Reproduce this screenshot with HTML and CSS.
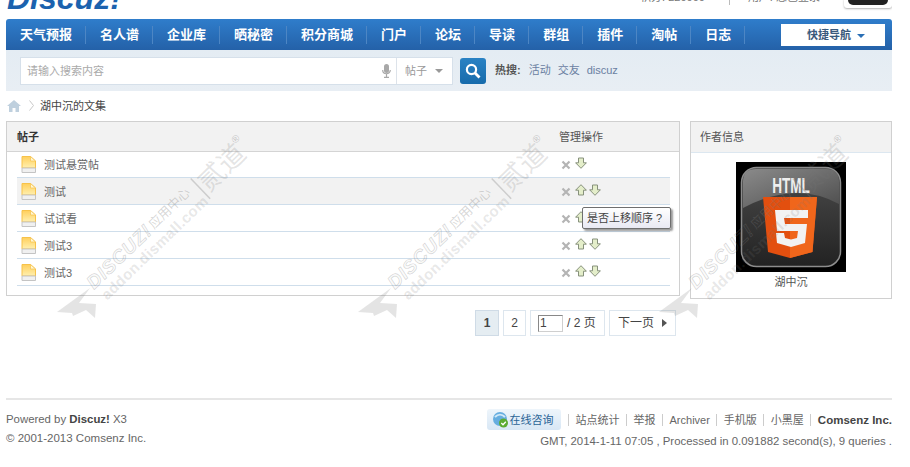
FILE: index.html
```html
<!DOCTYPE html>
<html lang="zh">
<head>
<meta charset="utf-8">
<title>湖中沉的文集</title>
<link rel="stylesheet" href="styles.css">
</head>
<body>
<svg class="defs" width="0" height="0" aria-hidden="true">
  <defs>
    <linearGradient id="docfill" x1="0" y1="0" x2="0" y2="1">
      <stop offset="0" stop-color="#ffcf5c"/><stop offset="1" stop-color="#fff0b0"/>
    </linearGradient>
    <symbol id="doc" viewBox="0 0 15 17">
      <path d="M1 .5H9.500L14.500 5V12H1Z" fill="url(#docfill)" stroke="#f7c24a"/>
      <path d="M9.500 .5V5H14.500Z" fill="#fff6d2" stroke="#f7c24a" stroke-width=".7"/>
      <path d="M1 12H14.500V16.500H1Z" fill="#f0f0f0" stroke="#c4c4c4"/>
    </symbol>
    <symbol id="x" viewBox="0 0 10 10">
      <path d="M1.500 1.500L8.500 8.500M8.500 1.500L1.500 8.500" stroke="#b4b4b4" stroke-width="2.200"/>
    </symbol>
    <symbol id="up" viewBox="0 0 12 12">
      <path d="M6 .7L11.400 6.200H8.500V11H3.500V6.200H.6Z" fill="#e4eeca" stroke="#87917c"/>
    </symbol>
    <symbol id="down" viewBox="0 0 12 12">
      <path d="M6 11.300L11.400 5.800H8.500V1H3.500V5.800H.6Z" fill="#e4eeca" stroke="#87917c"/>
    </symbol>
    <g id="mark">
      <path d="M0 25L33 1L22 16L39 17L38 31L29 23L16 29L15 26Z" class="wm-fill"/>
      <g transform="translate(37,3) rotate(-44)">
        <text class="wm-brand" x="0" y="0">DISCUZ!</text>
        <text class="wm-cn" x="85" y="-2">应用中心</text>
        <path d="M147 -13V15" class="wm-line"/>
        <text class="wm-dao" x="150" y="10">贰道</text>
        <text class="wm-reg" x="203" y="-7">®</text>
        <text class="wm-url" x="2" y="17">addon.dismall.com</text>
      </g>
    </g>
  </defs>
</svg>

<div class="page">
  <header class="top">
    <div class="logo">Discuz!</div>
    <div class="top-right">
      <span class="top-stat">积分: 220000</span>
      <span class="top-sep"></span>
      <span class="top-user">用户: 您已登录</span>
      <span class="top-badge"><span class="top-badge-in"></span></span>
    </div>
  </header>

  <nav class="nav">
    <ul class="nav-list">
      <li>天气预报</li><li>名人谱</li><li>企业库</li><li>晒秘密</li><li>积分商城</li><li>门户</li><li>论坛</li><li>导读</li><li>群组</li><li>插件</li><li>淘帖</li><li>日志</li>
    </ul>
    <div class="quick">快捷导航<span class="quick-caret"></span></div>
  </nav>

  <div class="search">
    <div class="search-box">
      <span class="search-ph">请输入搜索内容</span>
      <svg class="mic" width="9" height="14" viewBox="0 0 9 14"><rect x="2" y="0" width="5" height="9" rx="2.500" fill="#a8a8a8"/><path d="M.7 6c0 5 7.600 5 7.600 0M4.500 10v3M2 13.400h5" fill="none" stroke="#a8a8a8" stroke-width="1.200"/></svg>
      <span class="search-type">帖子<span class="type-caret"></span></span>
    </div>
    <div class="search-btn">
      <svg width="16" height="16" viewBox="0 0 16 16"><circle cx="6.500" cy="6.500" r="4.600" fill="none" stroke="#fff" stroke-width="2.200"/><path d="M10 10L14.500 14.500" stroke="#fff" stroke-width="2.800"/></svg>
    </div>
    <div class="hot"><strong>热搜:</strong><a>活动</a><a>交友</a><a>discuz</a></div>
  </div>

  <div class="crumb">
    <svg class="home" width="14" height="12" viewBox="0 0 14 12"><path d="M7 0L14 6H12V12H8.500V8H5.500V12H2V6H0Z" fill="#bfd0de"/></svg>
    <svg class="chev" width="5" height="11" viewBox="0 0 5 11"><path d="M.5 .5L4.500 5.500L.5 10.500" fill="none" stroke="#c9c9c9"/></svg>
    <span>湖中沉的文集</span>
  </div>

  <main class="main">
    <section class="content">
      <div class="panel">
        <div class="panel-head list-head"><strong>帖子</strong><span class="ops-title">管理操作</span></div>
        <ul class="rows">
          <li class="row"><svg class="doc"><use href="#doc"/></svg><span class="subject">测试悬赏帖</span><span class="ops"><svg class="ic-x"><use href="#x"/></svg><svg class="ic-arrow"><use href="#down"/></svg></span></li>
          <li class="row row-on"><svg class="doc"><use href="#doc"/></svg><span class="subject">测试</span><span class="ops"><svg class="ic-x"><use href="#x"/></svg><svg class="ic-arrow"><use href="#up"/></svg><svg class="ic-arrow"><use href="#down"/></svg></span></li>
          <li class="row"><svg class="doc"><use href="#doc"/></svg><span class="subject">试试看</span><span class="ops"><svg class="ic-x"><use href="#x"/></svg><svg class="ic-arrow"><use href="#up"/></svg><svg class="ic-arrow"><use href="#down"/></svg></span><div class="tip">是否上移顺序 ?</div></li>
          <li class="row"><svg class="doc"><use href="#doc"/></svg><span class="subject">测试3</span><span class="ops"><svg class="ic-x"><use href="#x"/></svg><svg class="ic-arrow"><use href="#up"/></svg><svg class="ic-arrow"><use href="#down"/></svg></span></li>
          <li class="row"><svg class="doc"><use href="#doc"/></svg><span class="subject">测试3</span><span class="ops"><svg class="ic-x"><use href="#x"/></svg><svg class="ic-arrow"><use href="#up"/></svg><svg class="ic-arrow"><use href="#down"/></svg></span></li>
        </ul>
      </div>
      <div class="pager">
        <span class="pg pg-cur">1</span>
        <span class="pg pg-num">2</span>
        <span class="pg pg-jump"><span class="pg-input">1</span><span>/ 2 页</span></span>
        <span class="pg pg-next">下一页<span class="next-caret"></span></span>
      </div>
    </section>

    <aside class="panel side">
      <div class="panel-head side-head">作者信息</div>
      <div class="side-body">
        <svg class="avatar" width="110" height="110" viewBox="0 0 110 110">
          <defs>
            <linearGradient id="tile" x1="0" y1="0" x2="0" y2="1">
              <stop offset="0" stop-color="#4c4c4c"/><stop offset="1" stop-color="#222"/>
            </linearGradient>
            <linearGradient id="gloss" x1="0" y1="0" x2="1" y2="1">
              <stop offset="0" stop-color="#8a8a8a"/><stop offset="1" stop-color="#4e4e4e"/>
            </linearGradient>
          </defs>
          <rect width="110" height="110" fill="#000"/>
          <rect x="5.500" y="5.500" width="99" height="99" rx="15" fill="url(#tile)" stroke="#8c8c8c" stroke-width="1.500"/>
          <path d="M7 46V20Q7 7 20 7H90Q103 7 103 20V42Q60 18 7 46Z" fill="url(#gloss)"/>
          <text class="av-html" transform="translate(55,31) scale(.68,1.120)">HTML</text>
          <path d="M27 35H81L76.500 90L54 96L32 90Z" fill="#e34f0f"/>
          <path d="M54 35H81L76.500 90L54 96Z" fill="#f0661b"/>
          <path d="M39 48H72V56H48L49 62H71L69 81L55 85L41 81L40 71H48L49 76L55 77.500L61 76L62 69H41Z" fill="#f2f2f2"/>
        </svg>
        <div class="side-name">湖中沉</div>
      </div>
    </aside>
  </main>

  <footer class="foot">
    <div class="foot-left">
      <p class="foot-power">Powered by <strong>Discuz!</strong> X3</p>
      <p class="foot-copy">© 2001-2013 Comsenz Inc.</p>
    </div>
    <div class="foot-right">
      <div class="foot-links">
        <span class="consult">
          <svg width="18" height="18" viewBox="0 0 18 18"><circle cx="8" cy="8" r="7" fill="#66addf"/><path d="M3 6c3-3 7-3 10 0" fill="none" stroke="#cfe8f8" stroke-width="2"/><circle cx="11.500" cy="12" r="4.500" fill="#5cab32"/><path d="M9.300 12l1.700 1.700 2.800-3" fill="none" stroke="#fff" stroke-width="1.300"/></svg>
          在线咨询
        </span>
        <a>站点统计</a><a>举报</a><a>Archiver</a><a>手机版</a><a>小黑屋</a><a class="foot-strong">Comsenz Inc.</a>
      </div>
      <p class="foot-time">GMT, 2014-1-11 07:05 , Processed in 0.091882 second(s), 9 queries .</p>
    </div>
  </footer>
</div>

<svg class="watermark" width="910" height="467" aria-hidden="true">
  <use href="#mark" x="57" y="287"/>
  <use href="#mark" x="358" y="287"/>
  <use href="#mark" x="659" y="287"/>
</svg>
</body>
</html>
```

FILE: styles.css
```css
* { box-sizing: border-box; }
html, body { margin: 0; padding: 0; background: #fff; overflow: hidden; }
body {
  width: 910px;
  height: 467px;
  position: relative;
  font: 11px/16px "Liberation Sans", "Noto Sans CJK SC", sans-serif;
  color: #444;
}
p, ul { margin: 0; padding: 0; list-style: none; }
a { color: inherit; text-decoration: none; }
.defs { position: absolute; }
.page { width: 886px; margin-left: 6px; }

/* top */
.top { height: 19px; display: flex; justify-content: space-between; overflow: hidden; position: relative; }
.logo {
  margin: -17px 0 0 1px;
  font: italic bold 32px/30px "Liberation Sans", sans-serif;
  color: #1b62ae;
}
.top-right { display: flex; align-items: flex-start; color: #777; font-size: 11px; white-space: nowrap; }
.top-stat { margin: -11px 0 0 0; }
.top-sep { flex: none; width: 1px; height: 6px; background: #bbb; margin: -1px 18px 0 24px; }
.top-user { margin: -11px 24px 0 0; }
.top-badge { flex: none; width: 48px; height: 9px; margin-top: -1px; padding: 0 4px; background: #fff; border-radius: 0 0 3px 3px; box-shadow: 0 1px 2px rgba(0,0,0,.3); }
.top-badge-in { display: block; width: 40px; height: 6px; background: #222; border-radius: 0 0 5px 5px; }

/* nav */
.nav {
  height: 31px;
  display: flex;
  justify-content: space-between;
  background: linear-gradient(#2f7dcb, #2461a8);
  border-radius: 3px 3px 0 0;
  padding: 0 7px 0 0;
}
.nav-list { display: flex; padding-top: 7px; }
.nav-list li {
  height: 18px;
  padding: 0 13px 0 14px;
  border-right: 1px solid #4d86c4;
  font-size: 13px;
  line-height: 17px;
  font-weight: bold;
  color: #fff;
}
.quick {
  width: 104px;
  height: 22px;
  margin-top: 5px;
  padding-left: 26px;
  display: flex;
  align-items: center;
  background: #fff;
  color: #3a5a7c;
  font-weight: bold;
}
.quick-caret { border: 4px solid transparent; border-top-color: #2a6fb5; border-bottom: 0; margin: 2px 0 0 6px; }

/* search */
.search {
  height: 41px;
  display: flex;
  padding: 7px 0 0 14px;
  background: linear-gradient(#e4ecf3, #e8eef4);
}
.search-box {
  width: 433px;
  height: 28px;
  display: flex;
  align-items: center;
  background: #fff;
  border: 1px solid #d6e0ea;
  padding-left: 6px;
}
.search-ph { color: #aaa; flex: 1; }
.mic { margin-right: 5px; }
.search-type {
  width: 56px;
  height: 26px;
  line-height: 26px;
  padding-left: 8px;
  border-left: 1px solid #dde3ea;
  color: #999;
  display: flex;
  align-items: center;
}
.type-caret { border: 4px solid transparent; border-top-color: #999; border-bottom: 0; margin-left: 8px; }
.search-btn {
  width: 26px;
  height: 26px;
  margin: 1px 0 0 7px;
  display: flex;
  align-items: center;
  justify-content: center;
  background: linear-gradient(#2a82c4, #176bab);
  border-radius: 3px;
}
.hot { display: flex; align-items: center; height: 26px; margin: 0 0 0 9px; color: #6a80a2; }
.hot strong { color: #555; margin-right: 8px; }
.hot a { margin-right: 7px; }

/* breadcrumb */
.crumb { height: 30px; display: flex; align-items: center; padding: 0 0 1px 1px; color: #444; }
.home { margin-right: 8px; }
.chev { margin-right: 6px; }

/* main */
.main { display: flex; gap: 10px; align-items: flex-start; }
.content { width: 674px; }
.panel { border: 1px solid #d0d0d0; }
.panel-head { background: #f2f2f2; height: 30px; line-height: 30px; }
.list-head {
  display: flex;
  justify-content: space-between;
  padding: 0 0 0 10px;
  border-bottom: 1px solid #d4d4d4;
}
.list-head strong { color: #333; }
.ops-title { width: 120px; color: #555; }
.rows { margin: -1px 9px 0 10px; padding-bottom: 9px; position: relative; }
.row {
  height: 27px;
  position: relative;
  display: flex;
  align-items: center;
  border-bottom: 1px solid #cfdeeb;
  padding: 1px 0 0 4px;
  color: #666;
}
.row-on { background: #f2f2f2; }
.doc { width: 15px; height: 17px; margin-right: 8px; }
.subject { flex: 1; }
.ops { width: 110px; display: flex; align-items: center; padding-left: 1px; }
.ic-x { width: 10px; height: 10px; margin: 0 4px 0 0; }
.ic-arrow { width: 12px; height: 12px; margin: -4px 2px 0 0; }
.tip {
  position: absolute;
  left: 565px;
  top: 2px;
  width: 89px;
  height: 22px;
  padding-left: 4px;
  line-height: 20px;
  color: #444;
  white-space: nowrap;
  border: 1px solid #6f6f6f;
  border-radius: 2px;
  background: linear-gradient(#fff, #e9e9f3);
  box-shadow: 2px 2px 2px rgba(0,0,0,.4);
}

/* pager */
.pager { display: flex; justify-content: flex-end; gap: 4px; margin: 14px 4px 0 0; height: 26px; }
.pg {
  height: 26px;
  border: 1px solid #dde6ee;
  line-height: 24px;
  font-size: 12px;
  color: #444;
  display: flex;
  align-items: center;
  justify-content: center;
}
.pg-cur { width: 24px; background: #e5edf2; border-color: #cfdbe6; font-weight: bold; }
.pg-num { width: 23px; }
.pg-jump { width: 75px; justify-content: flex-start; padding-left: 7px; gap: 4px; }
.pg-input { width: 25px; height: 17px; line-height: 15px; border: 1px solid #cfcfcf; border-top-color: #888; border-left-color: #888; padding-left: 1px; }
.pg-next { width: 67px; }
.next-caret { border: 4px solid transparent; border-left: 5px solid #555; border-right: 0; margin-left: 8px; }

/* side */
.side { width: 202px; height: 178px; }
.side-head { height: 31px; padding-left: 9px; border-bottom: 1px solid #dce7f0; color: #555; }
.side-body { display: flex; flex-direction: column; align-items: center; padding-top: 9px; }
.avatar { display: block; }
.side-name { margin-top: 2px; color: #555; }
.av-html { font: bold 20px "Liberation Sans", sans-serif; fill: #eee; text-anchor: middle; }

/* footer */
.foot {
  position: absolute;
  left: 6px;
  top: 398px;
  width: 886px;
  border-top: 2px solid #e6e6e6;
  display: flex;
  justify-content: space-between;
  color: #666;
  font-size: 12px;
}
.foot-left { padding-top: 10px; }
.foot-left p { line-height: 18px; }
.foot-left strong { color: #444; }
.foot-power { font-size: 11.4px; }
.foot-copy { margin-top: 1px; font-size: 11.5px; }
.foot-right { display: flex; flex-direction: column; align-items: flex-end; padding-top: 9px; }
.foot-links { display: flex; align-items: center; height: 21px; font-size: 11px; }
.foot-links a { padding: 0 6px 0 7px; border-left: 1px solid #ccc; line-height: 12px; }
.foot-links a:last-child { padding-right: 0; }
.foot-strong { font-weight: bold; font-size: 11.5px; color: #444; }
.consult {
  width: 74px;
  height: 21px;
  margin-right: 7px;
  display: flex;
  align-items: center;
  padding-left: 5px;
  background: linear-gradient(#eef5fb, #d8e7f5);
  border-radius: 3px;
  color: #2a6496;
}
.foot-time { line-height: 16px; margin-top: 3px; font-size: 11.4px; }

/* watermark overlay */
.watermark { position: absolute; left: 0; top: 0; pointer-events: none; }
.wm-fill { fill: rgba(120,120,120,.2); }
.wm-brand { font: italic bold 19px "Liberation Sans", sans-serif; letter-spacing: .8px; fill: rgba(120,120,120,.05); stroke: rgba(120,120,120,.3); stroke-width: .7; }
.wm-cn { font: 13px "Noto Sans CJK SC", sans-serif; fill: rgba(120,120,120,.3); }
.wm-line { stroke: rgba(120,120,120,.3); stroke-width: 1.5; }
.wm-dao { font: 27px "Noto Sans CJK SC", sans-serif; fill: rgba(120,120,120,.2); }
.wm-reg { font: 10px "Liberation Sans", sans-serif; fill: rgba(120,120,120,.4); }
.wm-url { font: bold 15px "Liberation Sans", sans-serif; fill: rgba(120,120,120,.18); letter-spacing: .35px; }
```
